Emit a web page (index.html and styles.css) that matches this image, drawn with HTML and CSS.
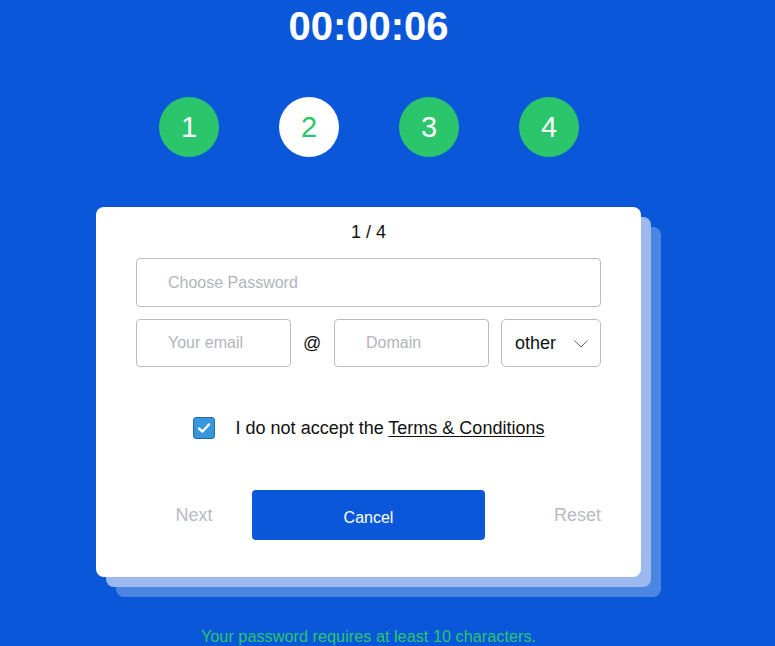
FILE: index.html
```html
<!DOCTYPE html>
<html lang="en">
<head>
<meta charset="utf-8">
<title>Sign up</title>
<link rel="stylesheet" href="styles.css">
</head>
<body>
<main class="page">
  <div class="timer">00:00:06</div>
  <ol class="steps">
    <li class="step">1</li>
    <li class="step step-current">2</li>
    <li class="step">3</li>
    <li class="step">4</li>
  </ol>
  <form class="card">
    <div class="counter">1 / 4</div>
    <div class="field field-wide"><span class="placeholder">Choose Password</span></div>
    <div class="email-row">
      <div class="field field-half"><span class="placeholder">Your email</span></div>
      <span class="at">@</span>
      <div class="field field-half"><span class="placeholder">Domain</span></div>
      <div class="select">
        <span class="select-value">other</span>
        <svg class="chevron" width="14" height="8" viewBox="0 0 14 8"><polyline points="0.5,0.5 7,7 13.5,0.5" fill="none" stroke="#6b6f75" stroke-width="1"/></svg>
      </div>
    </div>
    <label class="terms">
      <span class="checkbox">
        <svg width="14" height="12" viewBox="0 0 14 12"><polyline points="2,6.5 5.5,9.5 12,2.5" fill="none" stroke="#fff" stroke-width="2.4" stroke-linecap="round" stroke-linejoin="round"/></svg>
      </span>
      <span class="terms-text">I do not accept the <u>Terms &amp; Conditions</u></span>
    </label>
    <div class="actions">
      <span class="link-btn link-next">Next</span>
      <span class="primary-btn">Cancel</span>
      <span class="link-btn link-reset">Reset</span>
    </div>
  </form>
  <p class="hint">Your password requires at least 10 characters.</p>
</main>
</body>
</html>
```
FILE: styles.css
```css
html, body {
  margin: 0;
  padding: 0;
  height: 100%;
  overflow: hidden;
}
body {
  background: #0b57d9;
  font-family: "Liberation Sans", Arial, sans-serif;
  color: #111;
}
.page {
  width: 737px;
  display: flex;
  flex-direction: column;
  align-items: center;
  padding-top: 3px;
}
.timer {
  font-size: 40px;
  line-height: 46px;
  font-weight: bold;
  color: #fff;
}
.steps {
  list-style: none;
  margin: 48px 0 0;
  padding: 0;
  display: flex;
  gap: 60px;
  margin-left: 1px;
}
.step {
  width: 60px;
  height: 60px;
  border-radius: 50%;
  background: #2bc66b;
  color: #fff;
  font-size: 29px;
  display: flex;
  align-items: center;
  justify-content: center;
}
.step-current {
  background: #fff;
  color: #2bc66b;
}
.card {
  margin: 50px 0 0;
  width: 545px;
  box-sizing: border-box;
  padding: 14px 40px 37px;
  background: #fff;
  border-radius: 8px;
  box-shadow: 10px 10px 0 #9cb9ee, 20px 20px 0 #4b85e2;
  display: flex;
  flex-direction: column;
}
.counter {
  text-align: center;
  font-size: 18px;
  line-height: 22px;
  color: #111;
}
.field {
  box-sizing: border-box;
  border: 1px solid #b9bcc2;
  border-radius: 4px;
  height: 48px;
  display: flex;
  align-items: center;
  padding-left: 31px;
  background: #fff;
}
.field-wide {
  margin-top: 15px;
  height: 49px;
}
.placeholder {
  font-size: 16px;
  color: #b2b5ba;
}
.email-row {
  margin-top: 12px;
  display: flex;
  align-items: center;
  gap: 12px;
}
.field-half {
  width: 155px;
}
.at {
  font-size: 18px;
  color: #111;
  width: 19px;
}
.select {
  box-sizing: border-box;
  width: 100px;
  height: 48px;
  border: 1px solid #b9bcc2;
  border-radius: 5px;
  display: flex;
  align-items: center;
  justify-content: space-between;
  padding: 0 12px 0 13px;
  margin-left: auto;
}
.select-value {
  font-size: 18px;
  color: #111;
}
.chevron {
  display: block;
  margin-top: 2px;
}
.terms {
  margin-top: 50px;
  display: flex;
  align-items: center;
  justify-content: center;
  gap: 21px;
  height: 22px;
}
.checkbox {
  box-sizing: border-box;
  width: 22px;
  height: 22px;
  border-radius: 3px;
  background: #3896dd;
  border: 1px solid #2a69a8;
  display: flex;
  align-items: center;
  justify-content: center;
}
.terms-text {
  font-size: 18px;
  color: #111;
}
.terms-text u {
  text-underline-offset: 2px;
}
.actions {
  margin-top: 51px;
  display: grid;
  grid-template-columns: 1fr 233px 1fr;
  align-items: center;
}
.link-btn {
  font-size: 18px;
  color: #b8bbc1;
}
.link-next {
  justify-self: center;
}
.link-reset {
  justify-self: end;
}
.primary-btn {
  height: 50px;
  border-radius: 4px;
  background: #0b57d9;
  color: #fff;
  font-size: 16px;
  display: flex;
  align-items: center;
  justify-content: center;
  padding-top: 5px;
  box-sizing: border-box;
}
.hint {
  margin: 50px 0 0;
  font-size: 16.3px;
  line-height: 18px;
  color: #2bc66b;
}
```
